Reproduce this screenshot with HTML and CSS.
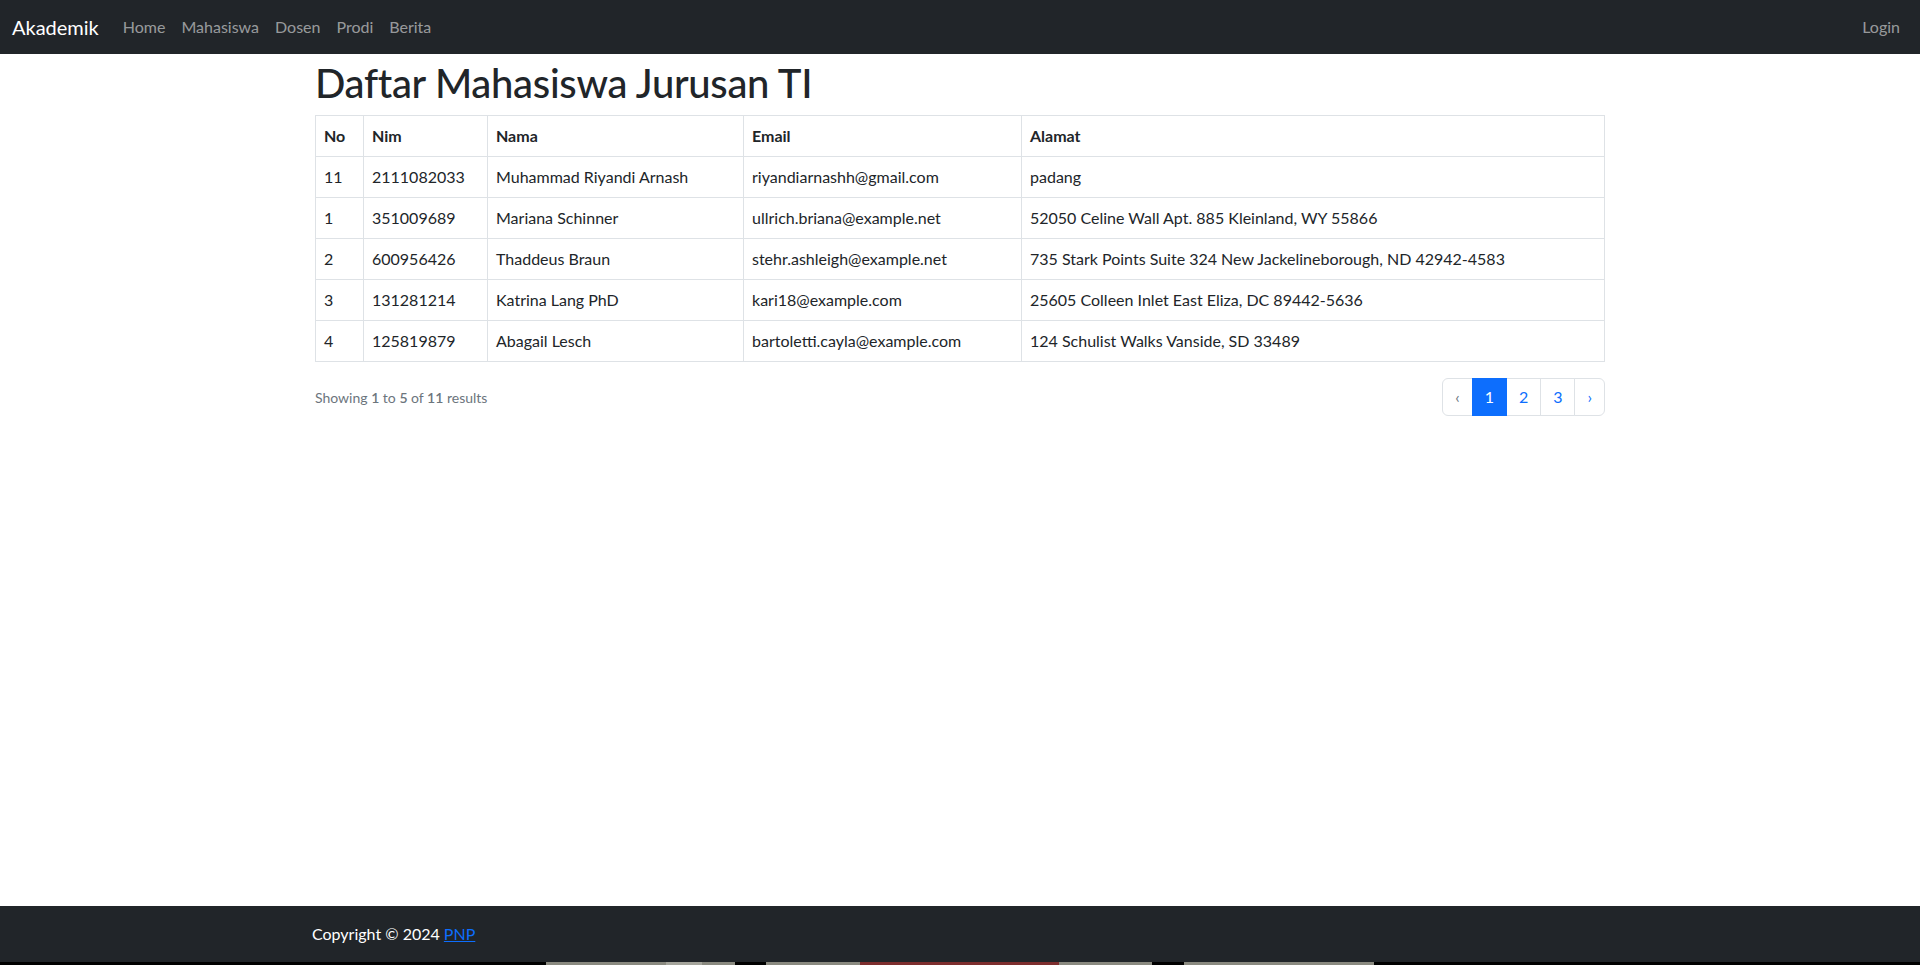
FILE: index.html
```html
<!DOCTYPE html>
<html lang="id">
<head>
<meta charset="utf-8">
<title>Akademik</title>
<link rel="stylesheet" href="styles.css">
</head>
<body>
<div class="layout">
  <nav class="navbar">
    <a class="brand" href="#">Akademik</a>
    <ul class="nav-links">
      <li><a href="#">Home</a></li>
      <li><a href="#">Mahasiswa</a></li>
      <li><a href="#">Dosen</a></li>
      <li><a href="#">Prodi</a></li>
      <li><a href="#">Berita</a></li>
    </ul>
    <a class="login" href="#">Login</a>
  </nav>

  <main class="container">
    <h1 class="title">Daftar Mahasiswa Jurusan TI</h1>
    <table class="data-table">
      <thead>
        <tr>
          <th class="c-no">No</th>
          <th class="c-nim">Nim</th>
          <th class="c-nama">Nama</th>
          <th class="c-email">Email</th>
          <th class="c-alamat">Alamat</th>
        </tr>
      </thead>
      <tbody>
        <tr><td>11</td><td>2111082033</td><td>Muhammad Riyandi Arnash</td><td>riyandiarnashh@gmail.com</td><td>padang</td></tr>
        <tr><td>1</td><td>351009689</td><td>Mariana Schinner</td><td>ullrich.briana@example.net</td><td>52050 Celine Wall Apt. 885 Kleinland, WY 55866</td></tr>
        <tr><td>2</td><td>600956426</td><td>Thaddeus Braun</td><td>stehr.ashleigh@example.net</td><td>735 Stark Points Suite 324 New Jackelineborough, ND 42942-4583</td></tr>
        <tr><td>3</td><td>131281214</td><td>Katrina Lang PhD</td><td>kari18@example.com</td><td>25605 Colleen Inlet East Eliza, DC 89442-5636</td></tr>
        <tr><td>4</td><td>125819879</td><td>Abagail Lesch</td><td>bartoletti.cayla@example.com</td><td>124 Schulist Walks Vanside, SD 33489</td></tr>
      </tbody>
    </table>

    <div class="pager-row">
      <p class="showing">Showing <b>1</b> to <b>5</b> of <b>11</b> results</p>
      <ul class="pagination">
        <li class="pg pg-first disabled"><span>&lsaquo;</span></li>
        <li class="pg active"><span>1</span></li>
        <li class="pg"><a href="#">2</a></li>
        <li class="pg"><a href="#">3</a></li>
        <li class="pg pg-last"><a href="#">&rsaquo;</a></li>
      </ul>
    </div>
  </main>

  <footer class="footer">
    <div class="footer-inner">Copyright &copy; 2024 <a href="#">PNP</a></div>
  </footer>
  <div class="strip">
    <span class="s-black s1"></span>
    <span class="s-gray s2"></span>
    <span class="s-light s3"></span>
    <span class="s-gray s4"></span>
    <span class="s-black s5"></span>
    <span class="s-gray s6"></span>
    <span class="s-red s7"></span>
    <span class="s-gray s8"></span>
    <span class="s-black s9"></span>
    <span class="s-gray s10"></span>
    <span class="s-black s11"></span>
  </div>
</div>
</body>
</html>
```

FILE: styles.css
```css
* { box-sizing: border-box; }
html, body { margin: 0; padding: 0; }
body {
  font-family: Lato, "Liberation Sans", sans-serif;
  font-size: 16px;
  line-height: 1.5;
  color: #212529;
  background: #fff;
}
.layout {
  height: 100vh;
  display: flex;
  flex-direction: column;
  overflow: hidden;
}
.navbar {
  height: 54px;
  flex: none;
  background: #212529;
  display: flex;
  align-items: center;
  padding: 0 12px;
}
.brand {
  color: #fff;
  font-size: 20px;
  text-decoration: none;
  margin-right: 16px;
  line-height: 30px;
}
.nav-links {
  list-style: none;
  display: flex;
  margin: 0;
  padding: 0;
  flex: 1;
}
.nav-links a, .login {
  display: block;
  padding: 8px;
  color: rgba(255,255,255,.55);
  text-decoration: none;
  line-height: 24px;
}
.container {
  flex: 1;
  width: 1320px;
  margin: 0 auto;
  padding: 0 15px;
}
.title {
  font-size: 40px;
  font-weight: 500;
  line-height: 1.2;
  letter-spacing: -0.3px;
  margin: 5px 0 8px;
}
.data-table {
  width: 100%;
  border-collapse: collapse;
  margin-bottom: 16px;
}
.data-table th, .data-table td {
  border: 1px solid #dee2e6;
  padding: 8px;
  text-align: left;
  vertical-align: top;
}
.data-table th { font-weight: 700; }
.c-no { width: 48px; }
.c-nim { width: 124px; }
.c-nama { width: 256px; }
.c-email { width: 278px; }
.pager-row {
  display: flex;
  justify-content: space-between;
  align-items: center;
}
.showing {
  margin: 0;
  font-size: 14px;
  color: #6c757d;
}
.showing b { font-weight: 600; color: #6c757d; }
.pagination {
  list-style: none;
  margin: 0;
  padding: 0;
  display: flex;
}
.pg span, .pg a {
  display: block;
  padding: 6px 12px;
  line-height: 24px;
  border: 1px solid #dee2e6;
  margin-left: -1px;
  color: #0d6efd;
  text-decoration: none;
  background: #fff;
}
.pg-first span { margin-left: 0; border-radius: 6px 0 0 6px; }
.pg-last a { border-radius: 0 6px 6px 0; }
.pg.disabled span { color: #6c757d; }
.pg.active span { background: #0d6efd; border-color: #0d6efd; color: #fff; position: relative; }
.footer {
  flex: none;
  background: #212529;
  color: #fff;
  padding: 16px 0;
}
.footer-inner {
  width: 1320px;
  margin: 0 auto;
  padding: 0 12px;
}
.footer a { color: #0d6efd; }
.strip { flex: none; height: 3px; display: flex; background: #000; }
.strip span { display: block; height: 3px; }
.s-black { background: #000; }
.s-gray { background: #8a8a80; }
.s-light { background: #a5a59c; }
.s-red { background: #7d2e2e; }
.s1 { width: 546px; }
.s2 { width: 120px; }
.s3 { width: 36px; }
.s4 { width: 33px; }
.s5 { width: 31px; }
.s6 { width: 94px; }
.s7 { width: 199px; }
.s8 { width: 93px; }
.s9 { width: 32px; }
.s10 { width: 190px; }
.s11 { flex: 1; }
```
